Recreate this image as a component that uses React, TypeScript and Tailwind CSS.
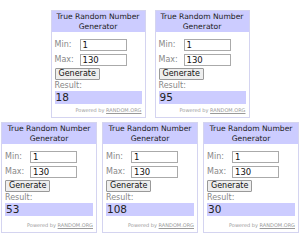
const font = { fontFamily: '"DejaVu Sans", Verdana, sans-serif' };

function Widget({ result, wide }: { result: string; wide?: boolean }) {
  return (
    <div
      className={`flex flex-col border border-[#d4d4f0] bg-white ${wide ? "w-[96px] h-[111px]" : "w-[95px] h-[108px]"}`}
      style={font}
    >
      <div className="bg-[#ccccff] text-[#222] text-center text-[7.6px] leading-[9.5px] pt-[1px] pb-[1px]">
        True Random Number
        <br />
        Generator
      </div>
      <div className="flex flex-col px-[3px] pt-[5px] flex-1">
        <div className="flex items-center h-[15px]">
          <span className="w-[25px] text-[8px] text-[#888]">Min:</span>
          <div className="w-[47px] h-[12px] border border-[#aaa] text-[8.5px] leading-[10px] pl-[2px] text-[#111]">1</div>
        </div>
        <div className="flex items-center h-[15px]">
          <span className="w-[25px] text-[8px] text-[#888]">Max:</span>
          <div className="w-[47px] h-[12px] border border-[#aaa] text-[8.5px] leading-[10px] pl-[2px] text-[#111]">130</div>
        </div>
        <div className="flex mt-[1px]">
          <div className="h-[12px] px-[3px] border border-[#999] bg-[#eee] rounded-[1px] text-[8px] leading-[10px] text-[#111]">
            Generate
          </div>
        </div>
        <div className="text-[8px] leading-[10px] text-[#888] mt-[1px]">Result:</div>
        <div className="h-[13px] bg-[#ccccff] text-[10.5px] leading-[13px] text-[#222] pl-[1px]">{result}</div>
        <div className="mt-auto mb-[3px] text-right text-[5px] text-[#999]">
          Powered by <span className="underline">RANDOM.ORG</span>
        </div>
      </div>
    </div>
  );
}

export default function App() {
  return (
    <div className="w-[300px] h-[240px] bg-white pt-[10px]">
      <div className="flex justify-center gap-[9px]">
        <Widget result="18" />
        <Widget result="95" />
      </div>
      <div className="flex justify-center gap-[5px] mt-[4px]">
        <Widget result="53" wide />
        <Widget result="108" wide />
        <Widget result="30" wide />
      </div>
    </div>
  );
}
